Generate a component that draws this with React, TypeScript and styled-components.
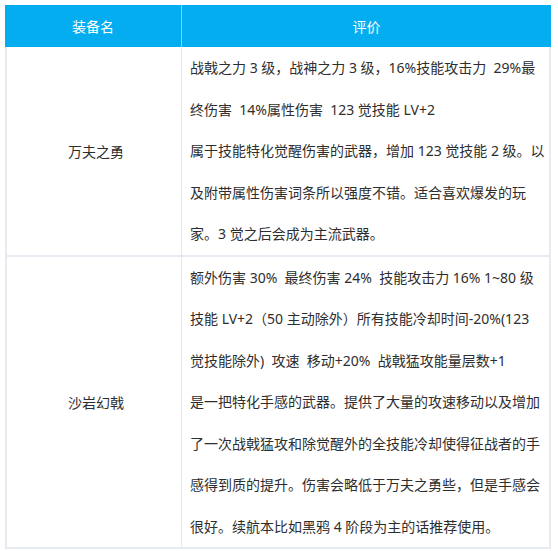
import React from "react";
import styled, { createGlobalStyle } from "styled-components";

const Global = createGlobalStyle`
  html, body { margin: 0; padding: 0; background: #ffffff; }
  body {
    font-family: "Noto Sans", "Noto Sans CJK SC", sans-serif;
    -webkit-font-smoothing: antialiased;
  }
`;

const Page = styled.div`
  padding: 5px 0 0 5px;
`;

const Table = styled.div`
  width: 546px;
  display: grid;
  grid-template-columns: 177px 369px;
  box-sizing: border-box;
`;

const HeadCell = styled.div<{ $last?: boolean }>`
  height: 42px;
  background: #03adef;
  color: #ffffff;
  font-size: 14px;
  display: flex;
  align-items: center;
  justify-content: center;
  box-sizing: border-box;
  border-right: ${(p) => (p.$last ? "none" : "1px solid #7fd3f5")};
`;

const NameCell = styled.div`
  display: flex;
  align-items: center;
  justify-content: center;
  font-size: 14px;
  color: #2e2e2e;
  box-sizing: border-box;
  border-left: 2px solid #e6ebf2;
  border-right: 1px solid #e3e9f0;
  border-bottom: 2px solid #e6ebf2;
  padding-left: 4px;
`;

const TextCell = styled.div`
  box-sizing: border-box;
  padding: 0 0 0 8px;
  border-right: 2px solid #e6ebf2;
  border-bottom: 2px solid #e6ebf2;
  color: #2e2e2e;
  font-size: 14px;
`;

const Line = styled.div`
  height: 41.5px;
  line-height: 41.5px;
  white-space: pre;
`;

const rows = [
  {
    name: "万夫之勇",
    lines: [
      "战戟之力 3 级，战神之力 3 级，16%技能攻击力  29%最",
      "终伤害  14%属性伤害  123 觉技能 LV+2",
      "属于技能特化觉醒伤害的武器，增加 123 觉技能 2 级。以",
      "及附带属性伤害词条所以强度不错。适合喜欢爆发的玩",
      "家。3 觉之后会成为主流武器。",
    ],
  },
  {
    name: "沙岩幻戟",
    lines: [
      "额外伤害 30%  最终伤害 24%  技能攻击力 16% 1~80 级",
      "技能 LV+2（50 主动除外）所有技能冷却时间-20%(123",
      "觉技能除外)  攻速  移动+20%  战戟猛攻能量层数+1",
      "是一把特化手感的武器。提供了大量的攻速移动以及增加",
      "了一次战戟猛攻和除觉醒外的全技能冷却使得征战者的手",
      "感得到质的提升。伤害会略低于万夫之勇些，但是手感会",
      "很好。续航本比如黑鸦 4 阶段为主的话推荐使用。",
    ],
  },
];

export default function App() {
  return (
    <Page>
      <Global />
      <Table>
        <HeadCell>装备名</HeadCell>
        <HeadCell $last>评价</HeadCell>
        {rows.map((r) => (
          <React.Fragment key={r.name}>
            <NameCell>{r.name}</NameCell>
            <TextCell>
              {r.lines.map((l, i) => (
                <Line key={i}>{l}</Line>
              ))}
            </TextCell>
          </React.Fragment>
        ))}
      </Table>
    </Page>
  );
}
